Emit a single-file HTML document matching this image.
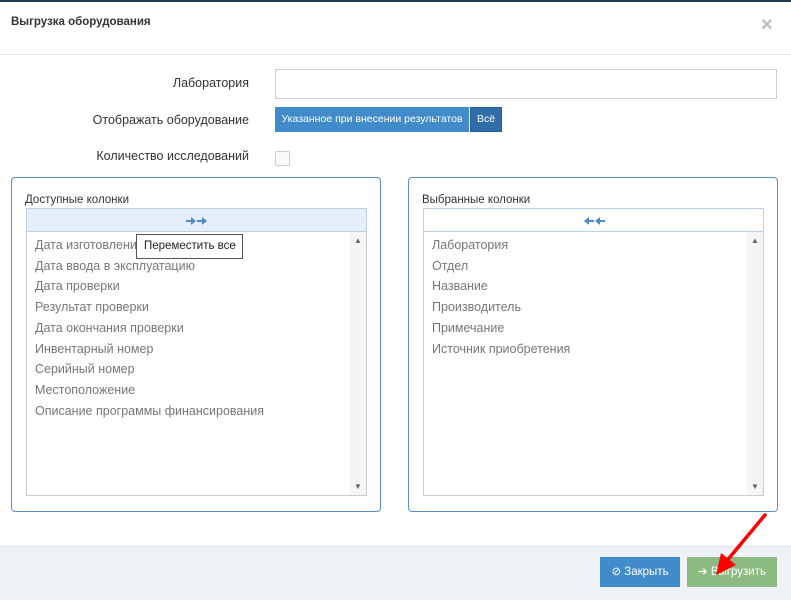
<!DOCTYPE html>
<html><head><meta charset="utf-8"><style>
*{box-sizing:border-box;margin:0;padding:0}
body{width:791px;height:600px;overflow:hidden;background:#fff;font-family:"Liberation Sans",sans-serif;position:relative;color:#333}
.a{position:absolute}
.lbl{font-size:12.5px;color:#333;text-align:right;width:249px;left:0}
.panel{border:1px solid #5b8fc9;border-radius:4px;top:177px;height:335px;width:370px}
.ttl{font-size:11.5px;left:13px;top:16px}
.bar{left:14px;top:30px;width:341px;height:24px;border:1px solid #bcd0e6}
.list{left:14px;top:54px;width:341px;height:264px;border:1px solid #ccc;border-top:none}
.it{position:absolute;left:8px;font-size:12.5px;color:#777}
.sb{position:absolute;right:0;top:0;width:16px;height:100%;background:#f5f5f5}
</style></head><body>
<div class="a" style="left:0;top:0;width:791px;height:2px;background:#1f3d4f"></div>
<div class="a" style="left:11px;top:16px;font-size:11.5px;font-weight:bold;color:#333">Выгрузка оборудования</div>
<div class="a" style="left:761px;top:14px;font-size:20px;color:#bbb;font-weight:bold">×</div>
<div class="a" style="left:0;top:54px;width:791px;height:1px;background:#e5e5e5"></div>
<div class="a lbl" style="top:76px">Лаборатория</div>
<div class="a" style="left:275px;top:69px;width:502px;height:30px;border:1px solid #ccc"></div>
<div class="a lbl" style="top:113px">Отображать оборудование</div>
<div class="a" style="left:275px;top:107px;width:194px;height:25px;background:#428bca;color:#fff;font-size:10.5px;line-height:25px;text-align:center">Указанное при внесении результатов</div>
<div class="a" style="left:470px;top:107px;width:32px;height:25px;background:#2f6ea8;border:1px solid #245c8f;color:#fff;font-size:10.5px;line-height:23px;text-align:center">Всё</div>
<div class="a lbl" style="top:149px">Количество исследований</div>
<div class="a" style="left:275px;top:151px;width:15px;height:15px;border:1px solid #ccc;border-radius:2px;background:#fafafa"></div>

<div class="a panel" style="left:11px">
<div class="a ttl">Доступные колонки</div>
<div class="a bar" style="background:#e6eff9"><svg class="a" style="left:158px;top:6px" width="24" height="12"><g fill="#4d8ccc"><path d="M1 5h5V2l5 4-5 4V7H1z"/><path d="M12 5h5V2l5 4-5 4V7h-5z"/></g></svg></div>
<div class="a list">
<div class="sb"><span style="position:absolute;left:4px;top:4px;font-size:8px;color:#666">▲</span><span style="position:absolute;left:4px;bottom:4px;font-size:8px;color:#666">▼</span></div>
<div class="it" style="top:6px">Дата изготовления</div>
<div class="it" style="top:27px">Дата ввода в эксплуатацию</div>
<div class="it" style="top:47px">Дата проверки</div>
<div class="it" style="top:68px">Результат проверки</div>
<div class="it" style="top:89px">Дата окончания проверки</div>
<div class="it" style="top:110px">Инвентарный номер</div>
<div class="it" style="top:130px">Серийный номер</div>
<div class="it" style="top:151px">Местоположение</div>
<div class="it" style="top:172px">Описание программы финансирования</div>
<div class="a" style="left:109px;top:2px;width:107px;height:25px;border:1px solid #555;background:#fff;font-size:11.5px;line-height:23px;padding-left:7px;color:#222">Переместить все</div>
</div></div>

<div class="a panel" style="left:408px">
<div class="a ttl">Выбранные колонки</div>
<div class="a bar" style="background:#fff"><svg class="a" style="left:158px;top:6px" width="24" height="12"><g fill="#4d8ccc"><path d="M23 5h-5V2l-5 4 5 4V7h5z"/><path d="M12 5H7V2L2 6l5 4V7h5z"/></g></svg></div>
<div class="a list">
<div class="sb"><span style="position:absolute;left:4px;top:4px;font-size:8px;color:#666">▲</span><span style="position:absolute;left:4px;bottom:4px;font-size:8px;color:#666">▼</span></div>
<div class="it" style="top:6px">Лаборатория</div>
<div class="it" style="top:27px">Отдел</div>
<div class="it" style="top:47px">Название</div>
<div class="it" style="top:68px">Производитель</div>
<div class="it" style="top:89px">Примечание</div>
<div class="it" style="top:110px">Источник приобретения</div>
</div></div>

<div class="a" style="left:0;top:546px;width:791px;height:54px;background:#eef1f6;border-top:1px solid #dde3ea"></div>
<div class="a" style="left:600px;top:557px;width:80px;height:30px;background:#428bca;color:#fff;font-size:11.5px;line-height:30px;text-align:center">⊘ Закрыть</div>
<div class="a" style="left:687px;top:557px;width:90px;height:30px;background:#8bbb80;color:#fff;font-size:11.5px;line-height:30px;text-align:center">➔ Выгрузить</div>
<svg class="a" style="left:700px;top:505px" width="80" height="80"><line x1="65" y1="10" x2="25" y2="58" stroke="#f00" stroke-width="3.5" stroke-linecap="round"/><polygon points="16,70 21,48 36,60" fill="#f00"/></svg>
</body></html>
